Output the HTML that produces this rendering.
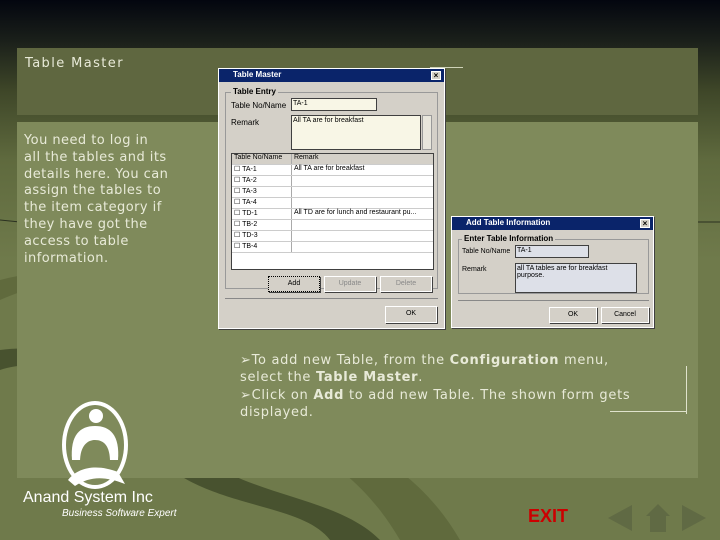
<!DOCTYPE html><html><head><style>
*{margin:0;padding:0;box-sizing:border-box}
body{width:720px;height:540px;overflow:hidden;position:relative;font-family:"DejaVu Sans","Liberation Sans",sans-serif;background:linear-gradient(#03060f 0px,#1a1f1a 40px,#3e4628 90px,#5f6a3e 160px,#6f7a4b 260px,#6f7a4b 540px)}
.abs{position:absolute}
.p1{left:17px;top:48px;width:681px;height:67px;background:#5f6740}
.p2{left:17px;top:122px;width:681px;height:356px;background:#7f8a5b}
.t{color:#e8ead8;font-size:13px;white-space:nowrap;letter-spacing:0.45px}
.win{background:#d4d0c8;border:1px solid #fff;box-shadow:1px 1px 0 #404040;font-family:"Liberation Sans",sans-serif;font-size:8px;color:#000}
.tb{background:#0a246a;color:#fff;font-weight:bold;height:13px;font-size:8px;padding:1px 14px}
.x{position:absolute;right:3px;top:2px;width:10px;height:9px;background:#d4d0c8;border:1px solid #fff;color:#000;font-size:8px;line-height:7px;text-align:center}
.inp{position:absolute;background:#f8f6e6;border:1px solid #404040;font-size:7px;padding:1px}
.grid{position:absolute;background:#fff;border:1px solid #404040}
.row{height:11px;border-bottom:1px solid #ccc;font-size:7px;display:flex}
.row span:first-child{width:60px;border-right:1px solid #aaa;padding-left:2px}
.btn{position:absolute;background:#d4d0c8;border:1px solid #fff;box-shadow:1px 1px 0 #404040;font-size:7px;text-align:center;line-height:14px}
</style></head><body>
<svg class="abs" style="left:0;top:0" width="720" height="540">
<path d="M0 300 C90 260 140 300 180 360 C230 440 330 420 400 540 L460 540 C390 420 280 440 220 360 C180 300 120 250 0 280Z" fill="#5a6438" opacity=".7"/>
<path d="M0 370 C60 350 100 400 150 450 C200 510 300 500 330 540 L380 540 C330 490 230 500 170 430 C120 380 70 340 0 350Z" fill="#3e4828" opacity=".8"/>
<path d="M180 180 C200 240 260 280 320 300 C400 330 440 360 470 420" stroke="#6a7548" stroke-width="14" fill="none" opacity=".6"/>
<path d="M0 220 L20 222 M698 222 L720 222" stroke="#2a3020" stroke-width="1"/>
</svg>
<div class="abs p1"></div><div class="abs p2"></div>
<div class="abs t" style="left:25px;top:56px;letter-spacing:1.4px">Table Master</div>
<div class="abs t" style="left:24px;top:133px;line-height:16.8px">You need to log in<br>all the tables and its<br>details here. You can<br>assign the tables to<br>the item category if<br>they have got the<br>access to table<br>information.</div>
<div class="abs" style="left:430px;top:67px;width:33px;height:1px;background:#cfd3b8"></div>
<div class="abs win" style="left:218px;top:68px;width:227px;height:261px">
<div class="tb">Table Master<div class="x">×</div></div>
<div class="abs" style="left:6px;top:23px;width:213px;height:197px;border:1px solid #999"></div>
<div class="abs" style="left:12px;top:18px;background:#d4d0c8;font-weight:bold;padding:0 2px">Table Entry</div>
<div class="abs" style="left:12px;top:32px">Table No/Name</div>
<div class="inp" style="left:72px;top:29px;width:86px;height:13px">TA-1</div>
<div class="abs" style="left:12px;top:49px">Remark</div>
<div class="inp" style="left:72px;top:46px;width:130px;height:35px">All TA are for breakfast</div>
<div class="abs" style="left:203px;top:46px;width:10px;height:35px;background:#e8e6dc;border:1px solid #999"></div>
<div class="grid" style="left:12px;top:84px;width:203px;height:117px">
<div class="row" style="background:#d4d0c8"><span>Table No/Name</span><span>&nbsp;Remark</span></div>
<div class="row"><span>☐ TA-1</span><span>&nbsp;All TA are for breakfast</span></div>
<div class="row"><span>☐ TA-2</span><span></span></div>
<div class="row"><span>☐ TA-3</span><span></span></div>
<div class="row"><span>☐ TA-4</span><span></span></div>
<div class="row"><span>☐ TD-1</span><span>&nbsp;All TD are for lunch and restaurant pu...</span></div>
<div class="row"><span>☐ TB-2</span><span></span></div>
<div class="row"><span>☐ TD-3</span><span></span></div>
<div class="row"><span>☐ TB-4</span><span></span></div>
</div>
<div class="btn" style="left:49px;top:207px;width:52px;height:16px;border:1px dotted #000">Add</div>
<div class="btn" style="left:105px;top:207px;width:52px;height:16px;color:#888">Update</div>
<div class="btn" style="left:161px;top:207px;width:52px;height:16px;color:#888">Delete</div>
<div class="abs" style="left:6px;top:229px;width:213px;height:1px;background:#888"></div>
<div class="btn" style="left:166px;top:237px;width:52px;height:17px">OK</div>
</div>
<div class="abs win" style="left:451px;top:216px;width:203px;height:112px">
<div class="tb">Add Table Information<div class="x">×</div></div>
<div class="abs" style="left:6px;top:22px;width:191px;height:55px;border:1px solid #999"></div>
<div class="abs" style="left:10px;top:17px;background:#d4d0c8;font-weight:bold;padding:0 2px">Enter Table Information</div>
<div class="abs" style="left:10px;top:31px;font-size:7px">Table No/Name</div>
<div class="inp" style="left:63px;top:28px;width:74px;height:13px;background:#dde0e8">TA-1</div>
<div class="abs" style="left:10px;top:49px;font-size:7px">Remark</div>
<div class="inp" style="left:63px;top:46px;width:122px;height:30px;background:#dde0e8">all TA tables are for breakfast purpose.</div>
<div class="abs" style="left:6px;top:83px;width:191px;height:1px;background:#888"></div>
<div class="btn" style="left:97px;top:90px;width:48px;height:16px">OK</div>
<div class="btn" style="left:149px;top:90px;width:48px;height:16px">Cancel</div>
</div>
<div class="abs t" style="left:240px;top:352px;line-height:17.3px;letter-spacing:0.7px">➢To add new Table, from the <b>Configuration</b> menu,<br>select the <b>Table Master</b>.<br>➢Click on <b>Add</b> to add new Table. The shown form gets<br>displayed.</div>
<div class="abs" style="left:686px;top:366px;width:1px;height:48px;background:#dfe2cc"></div>
<div class="abs" style="left:610px;top:411px;width:77px;height:1px;background:#dfe2cc"></div>
<svg class="abs" style="left:50px;top:400px" width="90" height="90">
<ellipse cx="45" cy="45" rx="33" ry="44" fill="#fff"/>
<ellipse cx="45" cy="45" rx="29" ry="40" fill="#7f8a5b"/>
<circle cx="46" cy="16" r="7" fill="#fff"/>
<path d="M22 60 C20 35 30 26 45 26 C60 26 70 35 68 60 Z" fill="#fff"/>
<path d="M30 62 C30 45 38 40 45 40 C54 40 60 46 60 62 Z" fill="#7f8a5b"/>
<path d="M18 80 C30 65 50 65 68 72 L75 84 C55 76 40 76 25 86Z" fill="#fff"/>
</svg>
<div class="abs" style="left:23px;top:489px;color:#fff;font-family:'Liberation Sans',sans-serif;font-size:16px">Anand System Inc</div>
<div class="abs" style="left:62px;top:508px;color:#fff;font-family:'Liberation Sans',sans-serif;font-size:10px;font-style:italic">Business Software Expert</div>
<div class="abs" style="left:528px;top:506px;color:#c00;font-family:'Liberation Sans',sans-serif;font-weight:bold;font-size:18px">EXIT</div>
<svg class="abs" style="left:606px;top:502px" width="104" height="32">
<path d="M2 16 L26 3 L26 29Z" fill="#606a44"/>
<path d="M52 2 L40 14 L44 14 L44 30 L60 30 L60 14 L64 14Z" fill="#606a44"/>
<path d="M76 3 L100 16 L76 29Z" fill="#606a44"/>
</svg>
</body></html>
